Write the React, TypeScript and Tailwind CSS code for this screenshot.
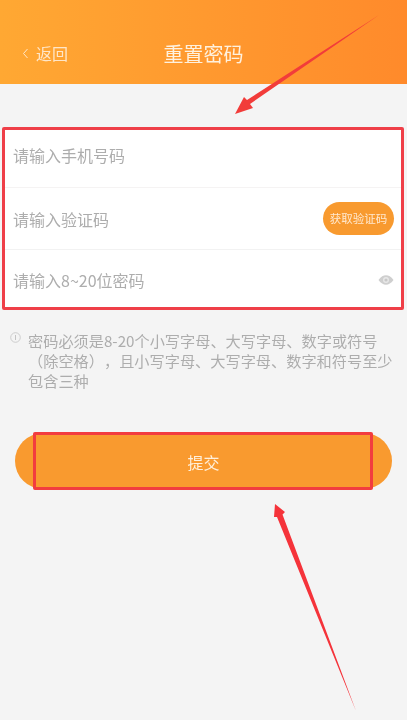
const font = { fontFamily: '"Noto Sans CJK SC", "Liberation Sans", sans-serif' };

function Row({
  label,
  children,
  className,
}: {
  label: string;
  children?: React.ReactNode;
  className: string;
}) {
  return (
    <div className={`flex items-center justify-between pl-[8px] pr-[7px] ${className}`}>
      <span className="text-[16px] leading-none text-[#adadad]">{label}</span>
      {children}
    </div>
  );
}

export default function App() {
  return (
    <div
      style={font}
      className="relative h-[720px] w-[407px] overflow-hidden bg-[#f4f4f4] blur-[0.5px]"
    >
      <header className="relative flex h-[84px] items-end justify-center bg-gradient-to-r from-[#ffa833] to-[#ff8a2b] pb-[20px]">
        <div className="absolute bottom-[23px] left-[22px] flex items-center gap-[7px] text-[#ffe6c8]">
          <svg width="7" height="11" viewBox="0 0 7 11" fill="none" stroke="currentColor" strokeWidth="1">
            <path d="M5.5 1 1.5 5.500 5.500 10" />
          </svg>
          <span className="text-[16px] leading-none">返回</span>
        </div>
        <h1 className="text-[20px] leading-none font-normal text-[#fff1de]">重置密码</h1>
      </header>

      <section className="mt-[43px] ml-[2px] flex h-[183px] w-[402px] flex-col rounded-[2px] border-[3px] border-[#ef3f48] bg-white">
        <Row label="请输入手机号码" className="h-[58px] border-b border-[#f5f3f3] pb-[7px]" />
        <Row label="请输入验证码" className="h-[62px] border-b border-[#f2f2f2]">
          <button className="flex h-[33px] w-[71px] items-center justify-center rounded-full bg-[#f89a2f] text-[11.5px] text-[#ffe9d0]">
            获取验证码
          </button>
        </Row>
        <Row label="请输入8~20位密码" className="flex-1 pt-[3px]">
          <svg width="16" height="10" viewBox="0 0 16 10">
            <path d="M0.5 5C3 1.6 5.4 0.3 8 0.3S13 1.6 15.5 5C13 8.4 10.6 9.7 8 9.7S3 8.4 0.5 5Z" fill="#cfcfcf" />
            <circle cx="8" cy="5" r="3" fill="#e8e8e8" />
            <circle cx="8" cy="5" r="1.6" fill="#c8c8c8" />
          </svg>
        </Row>
      </section>

      <div className="mt-[20px] flex pl-[10px] pr-[12px] text-[#adadad]">
        <svg width="11" height="11" viewBox="0 0 11 11" fill="none" stroke="#c4c4c4" className="mt-[2px] mr-[7px] shrink-0">
          <circle cx="5.5" cy="5.5" r="4.8" strokeWidth="0.8" />
          <path d="M5.5 3v5" strokeWidth="1" />
        </svg>
        <p className="text-[15.200px] leading-[20px] [text-spacing-trim:space-all]">
          密码必须是8-20个小写字母、大写字母、数字或符号（除空格），且小写字母、大写字母、数字和符号至少包含三种
        </p>
      </div>

      <div className="relative mx-[15px] mt-[43px]">
        <button className="flex h-[56px] w-[377px] items-center justify-center rounded-full bg-[#f99a2f] pt-[1px] text-[16px] text-[#fff0dc]">
          提交
        </button>
        <div className="absolute top-[-1px] left-[18px] h-[58px] w-[340px] rounded-[2px] border-[3px] border-[#f23c3f]" />
      </div>

      {/* annotation arrows drawn over the screenshot */}
      <svg width="407" height="720" viewBox="0 0 407 720" className="pointer-events-none absolute top-0 left-0">
        <path d="M379 15 247 100 244 97 235 114 253 108 250 104Z" fill="#f23c3a" />
        <path d="M356 711 277 517 274 517 275 504 285 512 282.500 514.500Z" fill="#f5333a" />
      </svg>
    </div>
  );
}
